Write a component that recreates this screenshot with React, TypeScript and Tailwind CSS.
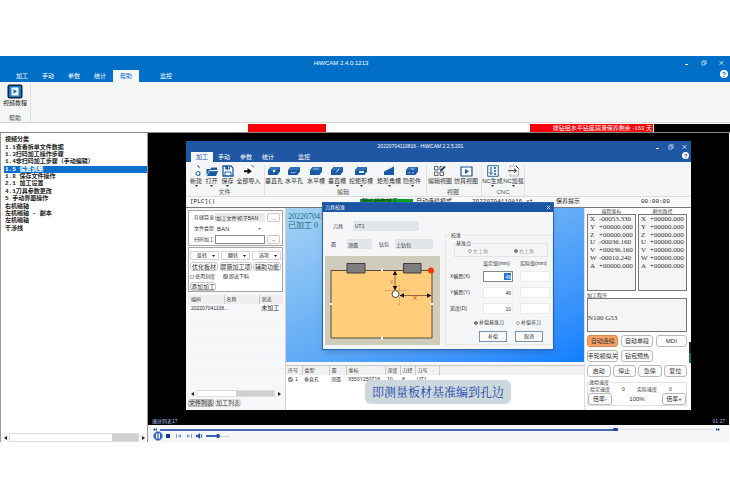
import React from 'react';

const TREE = [
  '视频分类',
  '1.1查看拆单文件数据',
  '1.3扫码加工操作步骤',
  '1.4非扫码加工步骤（手动编辑）',
  '1.5 偏置调整',
  '1.8 保存文件操作',
  '2.1 加工设置',
  '4.1刀具参数更改',
  '5 手动界面操作',
  '右机磁轴',
  '左机磁轴 - 副本',
  '左机磁轴',
  '干涉线',
];

function WindowButtons({ small }: { small?: boolean }) {
  return (
    <div className={small ? 'flex items-center gap-2' : 'flex items-center gap-3'}>
      <button aria-label="最小化" className="block">
        <svg width="5" height="6" viewBox="0 0 5 6"><path d="M1 4.5h3" stroke="#fff" /></svg>
      </button>
      <button aria-label="还原" className="block">
        <svg width="6" height="6" viewBox="0 0 6 6" fill="none" stroke="#dce9f8" strokeWidth=".7">
          <path d="M1.8 1.8V.8h3.4v3.2H4M.8 2h3.1v3H.8z" />
        </svg>
      </button>
      <button aria-label="关闭" className="block">
        <svg width="5" height="6" viewBox="0 0 5 6"><path d="M.7 1.2l3.6 3.6M4.3 1.2L.7 4.8" stroke="#fff" strokeWidth=".8" /></svg>
      </button>
    </div>
  );
}

function HelpButton({ small }: { small?: boolean }) {
  return (
    <button
      className={
        small
          ? 'flex h-[7px] w-[7px] items-center justify-center rounded-full bg-white text-[6px] leading-none font-bold text-[#1f57a5]'
          : 'flex h-2 w-2 items-center justify-center rounded-full bg-white text-[7px] leading-none font-bold text-[#006fc8]'
      }
    >
      ?
    </button>
  );
}

type TabsProps = { tabs: string[]; last: string; active: string; small?: boolean };

function Tabs({ tabs, last, active, small }: TabsProps) {
  const width = small ? 'w-[22px]' : 'w-[26px]';
  return (
    <nav className={small ? 'flex h-[10px] pl-[5px]' : 'flex h-3 pl-[9px]'}>
      {tabs.map((t) => (
        <button
          key={t}
          className={`${width} text-center text-[6px] leading-none ${
            t === active ? (small ? 'bg-[#f5f6f7] text-[#1f57a5]' : 'bg-[#f5f6f7] text-[#006fc8]') : 'text-white'
          }`}
        >
          {t}
        </button>
      ))}
      <button className={`${width} ml-[14px] text-center text-[6px] leading-none text-white`}>{last}</button>
    </nav>
  );
}

function Slab({ kind }: { kind: string }) {
  return (
    <svg width="14" height="10" viewBox="0 0 14 10">
      <path d="M1 4.2L3.6 1H13v4.6L10.4 9H1z" fill="#1959a5" />
      <path d="M1 4.2L3.6 1H13l-2.6 3.2z" fill="#2f73bd" />
      {kind === 'hole' && <circle cx="7" cy="5" r="1.3" fill="#dcebf8" />}
      {kind === 'dots' && <path d="M4 6.5h5" stroke="#dcebf8" strokeDasharray="1.4 1" />}
      {kind === 'slot' && <path d="M4.5 3h5" stroke="#9fc7ea" strokeWidth=".9" />}
      {kind === 'vslot' && <path d="M6 6.5l3-3.6" stroke="#c9dff3" />}
      {kind === 'rect' && <path d="M5 5h5v2H5z" fill="#dcebf8" />}
      {kind === 'hidden' && <path d="M3.5 6.8h2M7 6.8h2M6 3h3" stroke="#a9cbea" strokeWidth=".9" />}
    </svg>
  );
}

function ToolIcon({ kind }: { kind: string }) {
  switch (kind) {
    case 'new':
      return (
        <svg width="12" height="12" viewBox="0 0 12 12">
          <path d="M2 1h4.5L9 3.5V11H2z" fill="#fff" stroke="#e3e6ea" strokeWidth=".6" />
          <path d="M7 .5h1.2L9.500 2v1.500z" fill="#173f7c" />
          <circle cx="8" cy="8.500" r="2" fill="#fff" stroke="#3f74b4" strokeWidth="1.200" />
        </svg>
      );
    case 'open':
      return (
        <svg width="12" height="11" viewBox="0 0 12 11">
          <path d="M.5 9.500V3h4l1-1.500h5.500V4H3.500z" fill="#1959a5" />
          <path d="M1 10l2.500-5H12l-2 5z" fill="#1959a5" />
          <path d="M3 4.700h8" stroke="#f5f6f7" strokeWidth=".6" />
        </svg>
      );
    case 'save':
      return (
        <svg width="12" height="12" viewBox="0 0 12 12">
          <path d="M1 1h8l2 2v8H1z" fill="#fff" stroke="#1959a5" strokeWidth="1.300" />
          <path d="M3.200 1h4.800v3.500H3.200z" fill="#1959a5" />
          <path d="M3 11V7h6v4" fill="none" stroke="#1959a5" strokeWidth="1" />
          <path d="M6.200 1.600h1v2h-1z" fill="#fff" />
        </svg>
      );
    case 'import':
      return (
        <svg width="12" height="12" viewBox="0 0 12 12">
          <path d="M3 1h5l2 2v8H3z" fill="#fff" />
          <path d="M8 0l2.500 2.500V1z" fill="#173f7c" />
          <path d="M1 5.200h3.500V3L9 6.200 4.500 9.200V7.200H1z" fill="#111" />
        </svg>
      );
    case 'corner':
      return (
        <svg width="12" height="10" viewBox="0 0 12 10">
          <path d="M1 5.500L11 .5V9H1z" fill="#1959a5" />
        </svg>
      );
    case 'edit':
      return (
        <svg width="14" height="12" viewBox="0 0 14 12" fill="none" stroke="#555" strokeWidth=".9">
          <path d="M1.500 1.500h3.500v3.500H1.500zM1.500 7h3.500v3.500H1.500zM7 7h3.500v3.500H7zM7 5V1.500h2" />
          <path d="M7.500 6l4.500-4.500" stroke="#173f7c" strokeWidth="2" />
        </svg>
      );
    case 'play':
      return (
        <svg width="13" height="11" viewBox="0 0 13 11">
          <path d="M1 1h11v9H1z" fill="#fff" stroke="#1f4f92" strokeWidth="1.200" />
          <path d="M5 3l4 2.500L5 8z" fill="#1959a5" />
        </svg>
      );
    case 'generate':
      return (
        <svg width="12" height="12" viewBox="0 0 12 12" fill="none" stroke="#1959a5">
          <path d="M.7.700h10.600v10.600H.7z" strokeWidth=".9" />
          <path d="M4 2v7M2.500 7.500L4 9.500l1.500-2" />
          <path d="M8 2v8" strokeDasharray="2 1" strokeWidth="1.600" />
        </svg>
      );
    case 'load':
      return (
        <svg width="12" height="12" viewBox="0 0 12 12" fill="none" stroke="#333">
          <path d="M2 3.500V1h6l2.500 2.500V11H2V8.500" stroke="#a4a8ad" strokeWidth=".8" />
          <path d="M0 5.700h8M6 3.700l2.500 2L6 7.700" />
          <path d="M8 1l2.500 2.500" />
        </svg>
      );
    default:
      return <Slab kind={kind} />;
  }
}

type Tool = { label: string; icon: string; width: string; menu?: boolean };
const GROUPS: { name: string; pad: string; tools: Tool[] }[] = [
  {
    name: '文件',
    pad: 'pr-[3px]',
    tools: [
      { label: '新建', icon: 'new', width: 'w-4', menu: true },
      { label: '打开', icon: 'open', width: 'w-[15px]', menu: true },
      { label: '保存', icon: 'save', width: 'w-[17px]', menu: true },
      { label: '全部导入', icon: 'import', width: 'w-[25px]' },
    ],
  },
  {
    name: '编辑',
    pad: 'pr-[5px]',
    tools: [
      { label: '垂直孔', icon: 'hole', width: 'w-[18px]' },
      { label: '水平孔', icon: 'dots', width: 'w-[22px]' },
      { label: '水平槽', icon: 'slot', width: 'w-[22px]' },
      { label: '垂直槽', icon: 'vslot', width: 'w-5', menu: true },
      { label: '挖矩形槽', icon: 'rect', width: 'w-7', menu: true },
      { label: '矩形角槽', icon: 'corner', width: 'w-7', menu: true },
      { label: '隐形件', icon: 'hidden', width: 'w-[18px]', menu: true },
    ],
  },
  {
    name: '视图',
    pad: 'pr-[2px]',
    tools: [
      { label: '编辑视图', icon: 'edit', width: 'w-[26px]' },
      { label: '仿真视图', icon: 'play', width: 'w-[26px]' },
    ],
  },
  {
    name: 'CNC',
    pad: 'pr-0',
    tools: [
      { label: 'NC生成', icon: 'generate', width: 'w-[21px]', menu: true },
      { label: 'NC加载', icon: 'load', width: 'w-[21px]', menu: true },
    ],
  },
];

function Ribbon() {
  return (
    <div className="flex h-[35px] border-b border-[#dcdcdc] bg-[#f4f5f6] pt-[3px] pl-[2px] text-[#333]">
      {GROUPS.map((g) => (
        <div key={g.name} className={`${g.pad} border-r border-[#dfe1e4]`}>
          <div className="flex">
            {g.tools.map((t) => (
              <button key={t.label} className={`${t.width} flex h-6 flex-col items-center whitespace-nowrap`}>
                <span className="flex h-3 items-center justify-center"><ToolIcon kind={t.icon} /></span>
                <span className="text-[6px] leading-[8px]">{t.label}</span>
                {t.menu && (
                  <svg width="3" height="2" viewBox="0 0 3 2"><path d="M0 0h3L1.500 2z" fill="#333" /></svg>
                )}
              </button>
            ))}
          </div>
          <div className="text-center text-[6px] leading-[7px] text-[#555]">{g.name}</div>
        </div>
      ))}
    </div>
  );
}

function DropDown({ value }: { value: string }) {
  return (
    <div className="relative h-[9px] flex-1">
      <select aria-label={value} className="block h-full w-full appearance-none border border-[#d5d5d5] bg-white pl-[6px] text-[5px] leading-none">
        <option>{value}</option>
      </select>
      <svg className="pointer-events-none absolute top-[4px] right-[4px]" width="3" height="2" viewBox="0 0 3 2">
        <path d="M0 0h3L1.500 2z" fill="#111" />
      </svg>
    </div>
  );
}

const softButton = 'h-[9px] rounded-[3px] border border-[#c9c9c9] bg-white text-center text-[6px] leading-none whitespace-nowrap';

function ScrollBar({ thumb, height }: { thumb: string; height: string }) {
  return (
    <div className={`flex items-center bg-[#f5f5f5] ${height}`}>
      <button aria-label="向左" className="flex w-2 justify-center">
        <svg width="3" height="4" viewBox="0 0 3 4"><path d="M3 0v4L0 2z" fill="#222" /></svg>
      </button>
      <div className="flex h-full flex-1 justify-end border border-[#dedede] bg-white">
        <div className={`${thumb} h-full bg-[#cfd0d1]`} />
      </div>
      <button aria-label="向右" className="flex w-2 justify-center">
        <svg width="3" height="4" viewBox="0 0 3 4"><path d="M0 0v4l3-2z" fill="#222" /></svg>
      </button>
    </div>
  );
}

function FilePanel() {
  return (
    <div className="flex w-[100px] shrink-0 flex-col border-r border-[#d0d0d0] px-[2px] pt-[2px] text-[#333]">
      <div className="flex h-9 flex-col gap-[2px] border border-[#a5a5a5] bg-white px-[2px] pt-[2px] text-[5px]">
        <div className="flex h-[9px] items-center">
          <label htmlFor="dir" className="w-6 shrink-0 pl-[3px] whitespace-nowrap">存储目录</label>
          <input id="dir" readOnly defaultValue="\加工文件\柜子BAN" className="h-[9px] w-[50px] bg-[#e9e9e9] text-[5px]" />
          <button className="ml-[2px] h-[9px] flex-1 rounded-[2px] border border-[#c9c9c9] text-[6px] leading-none">...</button>
        </div>
        <div className="flex h-[9px] items-center">
          <label htmlFor="type" className="w-6 shrink-0 pl-[3px] whitespace-nowrap">文件类型</label>
          <div className="relative w-[50px]">
            <select id="type" className="block h-[9px] w-full appearance-none pl-[2px] text-[6px] leading-none">
              <option>BAN</option>
            </select>
            <svg className="pointer-events-none absolute top-[4px] right-[4px]" width="3" height="2" viewBox="0 0 3 2"><path d="M0 0h3L1.500 2z" fill="#777" /></svg>
          </div>
        </div>
        <div className="flex h-[9px] items-center">
          <label htmlFor="scan" className="w-6 shrink-0 pl-[3px] whitespace-nowrap">扫码加工</label>
          <input id="scan" className="h-[9px] w-[50px] border border-[#888] bg-white text-[6px]" />
          <button className="ml-[2px] h-[9px] flex-1 rounded-[2px] border border-[#c9c9c9] text-[6px] leading-none">→</button>
        </div>
      </div>
      <div className="mt-[1px] flex h-[45px] flex-col gap-[2px] border border-[#a5a5a5] bg-white px-[1px] pt-[3px]">
        <div className="flex gap-[2px]">
          <DropDown value="旋转" />
          <DropDown value="翻转" />
          <DropDown value="选项" />
        </div>
        <div className="flex justify-between">
          <button className={`${softButton} w-[28px]`}>优化板材</button>
          <button className={`${softButton} w-[32px]`}>屏蔽加工项</button>
          <button className={`${softButton} w-[28px]`}>辅助功能</button>
        </div>
        <div className="flex h-[7px] items-center gap-2 text-[5px] leading-none">
          <label className="flex items-center gap-[1px]">
            <input type="checkbox" className="h-1 w-1 appearance-none border border-[#bbb]" />使用刻度
          </label>
          <label className="flex items-center gap-[1px]">
            <input type="checkbox" defaultChecked className="h-[5px] w-[5px] accent-[#888]" />即送下料
          </label>
        </div>
        <button className={`${softButton} w-[26px]`}>添加加工</button>
      </div>
      <table className="mt-[3px] w-full table-fixed text-left text-[5px] leading-none">
        <thead>
          <tr className="h-[9px] bg-[#efefef]">
            <th className="w-[38%] border-r border-[#ccc] pl-[3px] font-normal">编码</th>
            <th className="w-[37%] border-r border-[#ccc] pl-[2px] font-normal">名称</th>
            <th className="pl-[2px] font-normal">状态</th>
          </tr>
        </thead>
        <tbody>
          <tr className="h-2 whitespace-nowrap">
            <td className="pl-[3px]">202207041108...</td>
            <td />
            <td className="pl-[2px] text-[6px]">未加工</td>
          </tr>
          {[0, 1, 2, 3].map((i) => (
            <tr key={i} className="h-[14px] border-b border-[#f3f3f3]"><td /><td /><td /></tr>
          ))}
        </tbody>
      </table>
      <div className="mt-auto"><ScrollBar height="h-[7px]" thumb="w-[38px]" /></div>
      <div className="mt-[2px] mb-[3px] flex h-2 gap-[1px] text-[6px] leading-none whitespace-nowrap">
        <button className="w-[26px] rounded-[2px] border border-[#bbb] bg-[#d4d4d4]">文件列表</button>
        <button className="w-[26px] rounded-[2px] border border-[#ddd]">加工列表</button>
      </div>
    </div>
  );
}

const PARTS_COLUMNS = [
  { name: '序号', value: '1', width: 'w-4' },
  { name: '类型', value: '垂直孔', width: 'w-[27px]' },
  { name: '面', value: '顶面', width: 'w-[17px]' },
  { name: '坐标', value: 'X550Y250Z18', width: 'w-[39px]' },
  { name: '深度', value: '10', width: 'w-[15px]' },
  { name: '刀径', value: '8', width: 'w-[15px]' },
  { name: '刀号', value: 'UT1', width: 'w-6' },
];

function CenterPanel() {
  return (
    <div className="flex min-w-0 flex-1 flex-col">
      <div className="h-[154px] bg-linear-to-br from-[#a5d3f2] via-[#62abf6] to-[#0a7fff] pt-[4px] pl-[2px] font-['Liberation_Serif','Noto_Sans_CJK_SC',serif] text-[8px] leading-[9px] text-[#1d6c7c]">
        <div>20220704110816</div>
        <div>已加工 0</div>
      </div>
      <div className="mt-[3px] h-[45px] border-t border-[#c8c8c8] bg-[linear-gradient(#f1f1f1_9px,#fff_9px)]">
        <table className="table-fixed text-left text-[5px] leading-none whitespace-nowrap text-[#333]">
          <thead>
            <tr className="h-[9px]">
              {PARTS_COLUMNS.map((c) => (
                <th key={c.name} className={`${c.width} border-r border-[#c8c8c8] pl-[2px] font-normal`}>{c.name}</th>
              ))}
            </tr>
          </thead>
          <tbody>
            <tr className="h-2">
              {PARTS_COLUMNS.map((c, i) => (
                <td key={c.name} className="pl-[2px]">
                  {i === 0 ? (
                    <label className="flex items-center gap-[2px]">
                      <input type="checkbox" defaultChecked className="h-[5px] w-[5px] accent-[#888]" />1
                    </label>
                  ) : (
                    c.value
                  )}
                </td>
              ))}
            </tr>
          </tbody>
        </table>
      </div>
    </div>
  );
}

const AXES = [
  ['X', '-00053.330', '+00000.000'],
  ['Y', '+00000.000', '+00000.000'],
  ['Z', '+00000.000', '+00000.000'],
  ['U', '-00036.160', '+00000.000'],
  ['V', '+00036.160', '+00000.000'],
  ['W', '-00010.240', '+00000.000'],
  ['A', '+00000.000', '+00000.000'],
];

function AxisBox({ title, column }: { title: string; column: number }) {
  return (
    <div className="flex-1">
      <div className="text-center text-[5px] leading-[6px] text-[#444]">{title}</div>
      <div className="h-[77px] border border-[#777] bg-[#f5f5f5] pt-[1px]">
        <div className="grid h-[54px] font-['Liberation_Serif',serif] text-[7px] leading-none text-[#333]">
          {AXES.map((a) => (
            <div key={a[0]} className="flex items-center">
              <span className="w-[11px] pl-[2px]">{a[0]}</span>
              <span>{a[column]}</span>
            </div>
          ))}
        </div>
      </div>
    </div>
  );
}

const roundButton = 'h-3 rounded-[3px] border border-[#b9b9b9] bg-[#fbfbfb] text-center text-[6px] leading-none whitespace-nowrap';

function StatusPanel() {
  return (
    <div className="w-[107px] shrink-0 border-l border-[#ddd] bg-white pr-1 pl-[2px] text-[#333]">
      <div className="flex gap-[2px]">
        <AxisBox title="编程坐标" column={1} />
        <AxisBox title="剩余路径" column={2} />
      </div>
      <div className="mt-[1px] text-[5px] leading-[6px]">加工程序</div>
      <div className="h-[34px] border border-[#777] bg-[#f5f5f5] pt-[15px] font-['Liberation_Serif',serif] text-[7px] leading-[8px]">N100 G53</div>
      <div className="mt-[3px] grid grid-cols-3 gap-x-[3px] gap-y-[3px]">
        <button className="h-3 rounded-[3px] border border-[#d98850] bg-[#f9a066] text-center text-[6px] leading-none">自动连续</button>
        <button className={roundButton}>自动单段</button>
        <button className={roundButton}>MDI</button>
        <button className={`${roundButton} flex justify-center items-center`}>手轮模拟关</button>
        <button className={roundButton}>钻包预热</button>
      </div>
      <div className="mt-[3px] grid grid-cols-4 gap-[2px]">
        {['启动', '停止', '急停', '复位'].map((b) => (
          <button key={b} className={roundButton}>{b}</button>
        ))}
      </div>
      <fieldset className="mt-[2px] border border-[#e2e2e2] px-0">
        <legend className="ml-[1px] text-[5px] leading-[6px]">进给速度</legend>
        <div className="flex justify-between px-[2px] text-[5px] leading-[8px]">
          <span>给定速度</span><span>0</span><span>实际速度</span><span>0</span><span />
        </div>
        <div className="flex items-center justify-between">
          <button className={`${roundButton} w-6`}>倍率-</button>
          <span className="text-[6px]">100%</span>
          <button className={`${roundButton} w-6`}>倍率+</button>
        </div>
      </fieldset>
    </div>
  );
}

function PlateDrawing() {
  return (
    <svg className="block" width="115" height="89" viewBox="0 0 115 89">
      <path d="M0 0h115v89H0z" fill="#d0ccbb" />
      <path d="M6 14.500h101v67.500H6z" fill="#ffcd7c" stroke="#5a4a35" />
      <path d="M22 7.500h18v9.500H22zM78.500 7.500h17.500v9.500H78.500z" fill="#7d7d7d" stroke="#3e3e3e" />
      <path d="M56 12.500h2v3h-2zM56 80.500h2v3h-2zM5 47h2v2H5zM106 47h2v2h-2z" fill="#fff" />
      <path d="M70 16v18M77 39.500h27" stroke="#7a4a28" strokeWidth=".8" />
      <path d="M60 34.500h9M74 34.500h10M74.500 29v5M74.500 41v8" stroke="#c18d50" strokeWidth=".7" strokeDasharray="2 1" />
      <path d="M70 14.500l2.300 4.500h-4.600zM70 34.500l2.300-4.500h-4.600zM74.500 39.500l4.500-2.300v4.600zM106.500 39.500l-4.500-2.300v4.600z" fill="#111" />
      <circle cx="70.500" cy="38" r="3.500" fill="#fff" stroke="#222" strokeWidth=".8" />
      <circle cx="106" cy="14.500" r="3" fill="#fb3100" />
      <text x="65" y="28" fontSize="5" fill="#a0522d">Y</text>
      <text x="88" y="44" fontSize="6" fill="#d1401c">X</text>
    </svg>
  );
}

function OffsetRow({ id, label, value, selected }: { id: string; label: string; value: string; selected?: boolean }) {
  return (
    <>
      <label htmlFor={id} className="whitespace-nowrap">{label}</label>
      <div className={`flex h-[11px] items-center justify-end border bg-white pr-[1px] ${selected ? 'border-[#888]' : 'border-[#ececec]'}`}>
        <input
          id={id}
          defaultValue={value}
          className={selected ? 'h-[7px] w-[7px] bg-[#1f74d4] text-right text-[5px] text-white' : 'h-[7px] w-full text-right text-[5px]'}
        />
      </div>
      <input aria-label={`${label} 实际值`} className="h-[11px] w-full border border-[#ececec] bg-white" />
    </>
  );
}

const dialogRadio = 'h-1 w-1 appearance-none rounded-full border border-[#aaa] checked:border-[#777] checked:bg-[#777]';

function CalibrationDialog() {
  return (
    <div role="dialog" className="absolute top-[61px] left-[136px] w-[232px] border border-[#2766b5] bg-[#f5f6f7] text-[5px] leading-none text-[#333] shadow-md">
      <div className="flex h-[9px] items-center justify-between bg-[#1b55a3] px-[2px] text-white">
        <span>刀具校准</span>
        <button aria-label="关闭对话框">
          <svg width="5" height="5" viewBox="0 0 5 5"><path d="M.8.8l3.400 3.400M4.200.8L.8 4.200" stroke="#fff" strokeWidth=".8" /></svg>
        </button>
      </div>
      <div className="flex pb-1">
        <div className="w-[122px] pt-[9px] pl-[2px]">
          <div className="flex h-[10px] items-center pl-2">
            <label htmlFor="tool" className="w-5">刀具</label>
            <input id="tool" readOnly defaultValue="UT1" className="h-[10px] w-[66px] bg-[#e2e5e9] px-[2px]" />
          </div>
          <div className="mt-2 flex h-[10px] items-center pl-[6px]">
            <label htmlFor="face" className="w-4">面</label>
            <input id="face" readOnly defaultValue="顶面" className="h-[10px] w-[25px] bg-[#e2e5e9] px-[1px]" />
            <label htmlFor="pack" className="ml-[7px] w-4">钻包</label>
            <input id="pack" readOnly defaultValue="上钻包" className="h-[10px] w-[38px] bg-[#e2e5e9] px-[1px]" />
          </div>
          <div className="mt-[7px]"><PlateDrawing /></div>
        </div>
        <fieldset className="mt-5 min-w-0 flex-1 border border-[#e8e8e8] pr-1 pl-1">
          <legend className="px-[1px] leading-[6px]">校准</legend>
          <fieldset className="mt-[2px] ml-1 border border-[#e5e5e5]">
            <legend className="ml-[1px] leading-[6px]">基准点</legend>
            <div className="flex h-[10px] items-center justify-around text-[#999]">
              <label className="flex items-center gap-[1px]"><input type="radio" name="origin" disabled className={dialogRadio} />左上角</label>
              <label className="flex items-center gap-[1px]"><input type="radio" name="origin" disabled defaultChecked className={dialogRadio} />右上角</label>
            </div>
          </fieldset>
          <div className="mt-1 grid grid-cols-[26px_30px_30px] items-center gap-x-[7px] gap-y-[5px]">
            <span />
            <span className="whitespace-nowrap">设定值(mm)</span>
            <span className="whitespace-nowrap">实际值(mm)</span>
            <OffsetRow id="dx" label="X偏置(X)" value="46" selected />
            <OffsetRow id="dy" label="Y偏置(Y)" value="46" />
            <OffsetRow id="width" label="宽度(D)" value="10" />
          </div>
          <div className="mt-[6px] flex justify-between pr-[7px] pl-6">
            <label className="flex items-center gap-[1px]"><input type="radio" name="mode" defaultChecked className={dialogRadio} />补偿基准刀</label>
            <label className="flex items-center gap-[1px]"><input type="radio" name="mode" className={dialogRadio} />补偿非刀</label>
          </div>
          <div className="mt-[6px] mb-[1px] flex justify-end gap-[8px] pr-[5px]">
            <button className="h-[11px] w-7 border border-[#7c93ae] bg-[#fafafa]">补偿</button>
            <button className="h-[11px] w-7 border border-[#7c93ae] bg-[#fafafa]">取消</button>
          </div>
        </fieldset>
      </div>
    </div>
  );
}

function RecordedWindow() {
  return (
    <section className="relative mt-2 mr-[38px] ml-[38px] bg-[#f6f7f8]">
      <header className="bg-[#1f57a5] text-white">
        <div className="grid h-[11px] grid-cols-[1fr_auto_1fr] items-center pr-1 text-[5px] leading-none">
          <span />
          <span className="pr-8">20220704110816 - HiWCAM 2.2.5.201</span>
          <div className="justify-self-end"><WindowButtons small /></div>
        </div>
        <div className="flex items-start justify-between pr-[2px]">
          <Tabs small tabs={['加工', '手动', '参数', '统计']} last="监控" active="加工" />
          <HelpButton small />
        </div>
      </header>
      <Ribbon />
      <div className="flex h-[11px] items-center overflow-hidden border-b border-[#777] bg-[#fafafa] font-['Liberation_Mono','Noto_Sans_CJK_SC',monospace] text-[6px] leading-none whitespace-nowrap text-[#222]">
        <span className="w-[174px] pl-1">[PLC]()</span>
        <span className="w-[53px] bg-[#08a01c] pl-[2px]">默认操作加工</span>
        <span className="w-[57px] pl-[3px]">自动连续模式</span>
        <span className="w-[84px] pl-[2px]">20220704110816.xt</span>
        <span className="flex-1 pl-[2px]">保养提示</span>
        <span className="w-[50px]">00:00:00</span>
      </div>
      <div className="flex">
        <FilePanel />
        <CenterPanel />
        <StatusPanel />
      </div>
      <div className="absolute top-[201px] right-0 h-[21px] w-[2px] bg-linear-to-b from-[#222] from-50% to-[#1c7a45] to-50%" />
      <CalibrationDialog />
      <div className="absolute top-[239px] left-[179px] flex h-6 w-[146px] items-center justify-center rounded-[6px] bg-[#ccd9dc] text-[12px] leading-none whitespace-nowrap text-[#2340b0] font-['Noto_Serif_CJK_SC','Noto_Sans_CJK_SC',serif]">
        即测量板材基准编到孔边
      </div>
    </section>
  );
}

function PlayerControls() {
  return (
    <div className="h-[17px] bg-[#f4f6f8] px-[5px] pt-[3px]">
      <div className="flex h-[3px] items-center gap-[3px]">
        <svg width="4" height="3" viewBox="0 0 4 3"><path d="M2 0v3L0 1.500zM4 0v3L2 1.500z" fill="#224a9c" /></svg>
        <div className="flex flex-1 items-center">
          <div className="h-[2px] w-[82%] bg-[#4668b4]" />
          <div className="h-[3px] w-[5px] rounded-[1px] bg-[#17409a]" />
          <div className="h-[1px] flex-1 bg-[#e3d9e0]" />
        </div>
        <svg className="mr-1" width="4" height="3" viewBox="0 0 4 3"><path d="M0 0v3l2-1.500zM2 0v3l2-1.500z" fill="#224a9c" /></svg>
      </div>
      <div className="flex h-[10px] items-center">
        <button aria-label="暂停" className="mr-[3px]">
          <svg className="block" width="10" height="10" viewBox="0 0 10 10">
            <circle cx="5" cy="5" r="4.500" fill="#2a5db8" stroke="#8fb0e0" />
            <path d="M3.700 2.500v5M6.300 2.500v5" stroke="#fff" strokeWidth="1.400" />
          </svg>
        </button>
        <button aria-label="停止播放" className="mr-[6px]">
          <svg className="block" width="4" height="4" viewBox="0 0 4 4"><path d="M0 0h4v4H0z" fill="#143a94" /></svg>
        </button>
        <button aria-label="上一个" className="mr-[6px]">
          <svg className="block" width="5" height="4" viewBox="0 0 5 4"><path d="M0 0h1v4H0zM5 0v4L2 2z" fill="#7f9fd6" /></svg>
        </button>
        <button aria-label="下一个" className="mr-[4px]">
          <svg className="block" width="5" height="4" viewBox="0 0 5 4"><path d="M4 0h1v4H4zM0 0v4l3-2z" fill="#7f9fd6" /></svg>
        </button>
        <button aria-label="静音" className="mr-[3px]">
          <svg className="block" width="7" height="6" viewBox="0 0 7 6">
            <path d="M0 2h1.500L4 0v6L1.500 4H0z" fill="#1f55b5" />
            <path d="M5 1.200q1.600 1.800 0 3.600" fill="none" stroke="#1f55b5" />
          </svg>
        </button>
        <div className="flex w-6 items-center">
          <div className="h-[2px] w-[10px] bg-[#3a66b8]" />
          <div className="h-[4px] w-[4px] rounded-full bg-[#1a469f]" />
          <div className="h-[1px] flex-1 bg-[#cdd6e4]" />
        </div>
      </div>
    </div>
  );
}

export default function App() {
  return (
    <div className="min-h-screen bg-white pt-14 font-['Liberation_Sans','Noto_Sans_CJK_SC',sans-serif]">
      <header className="bg-[#006fc8] text-white">
        <div className="grid h-[14px] grid-cols-[1fr_auto_1fr] items-center pr-[6px] text-[6px] leading-none">
          <span />
          <span className="pr-[42px]">HiWCAM 2.4.0.1213</span>
          <div className="justify-self-end"><WindowButtons /></div>
        </div>
        <div className="flex items-start justify-between pr-[2px]">
          <Tabs tabs={['加工', '手动', '参数', '统计', '帮助']} last="监控" active="帮助" />
          <HelpButton />
        </div>
      </header>
      <div className="h-[41px] border-b border-[#d8d8d8] bg-[#f4f5f5]">
        <div className="flex h-10 w-[31px] flex-col items-center border-r border-[#e2e2e2] pt-[2px] text-[6px] leading-[8px] text-[#222]">
          <button className="flex flex-col items-center whitespace-nowrap">
            <svg width="16" height="15" viewBox="0 0 16 15">
              <rect x=".5" y=".5" width="15" height="14" rx="2" fill="#14233a" />
              <path d="M2 2h12v11H2z" fill="#1681c4" />
              <path d="M4.500 3.500h7v8h-7z" fill="#fff" />
              <path d="M6.500 5l3.500 2.500L6.500 10z" fill="#1671b8" />
            </svg>
            视频教程
          </button>
          <span className="mt-[7px] text-[#555]">帮助</span>
        </div>
      </div>
      <div className="flex h-[9px] pt-[1px] text-[6px] leading-[8px] text-white">
        <div className="ml-[34%] w-[78px] bg-[#fb0007]" />
        <div className="ml-auto w-[123px] bg-[#fb0007] pr-[1px] text-right whitespace-nowrap">排钻组水平钻座润滑保养剩余 -163 天</div>
        <div className="ml-[1px] w-[76px] bg-black" />
      </div>
      <main className="flex border-t border-[#888]">
        <aside className="flex w-[148px] shrink-0 flex-col border-r border-l border-[#999] bg-white">
          <ul className="grid h-[99px] pt-[3px] font-['Liberation_Mono','Noto_Sans_CJK_SC',monospace] text-[6px] leading-[7px] font-bold text-[#222]">
            {TREE.map((t, i) => (
              <li key={i} className={`ml-[3px] flex items-center pl-[1px] whitespace-nowrap ${i === 4 ? 'bg-[#0a70d0] text-white' : ''}`}>
                {t}
              </li>
            ))}
          </ul>
          <div className="mt-auto"><ScrollBar height="h-[9px]" thumb="w-[26px]" /></div>
        </aside>
        <div className="mr-[1px] min-w-0 flex-1 bg-black">
          <RecordedWindow />
          <div className="flex h-[15px] items-end justify-between px-[4px] pb-[1px] text-[5px] leading-none text-[#aab9e8]">
            <span>播放列表17</span>
            <span>01:27</span>
          </div>
          <PlayerControls />
        </div>
      </main>
    </div>
  );
}
